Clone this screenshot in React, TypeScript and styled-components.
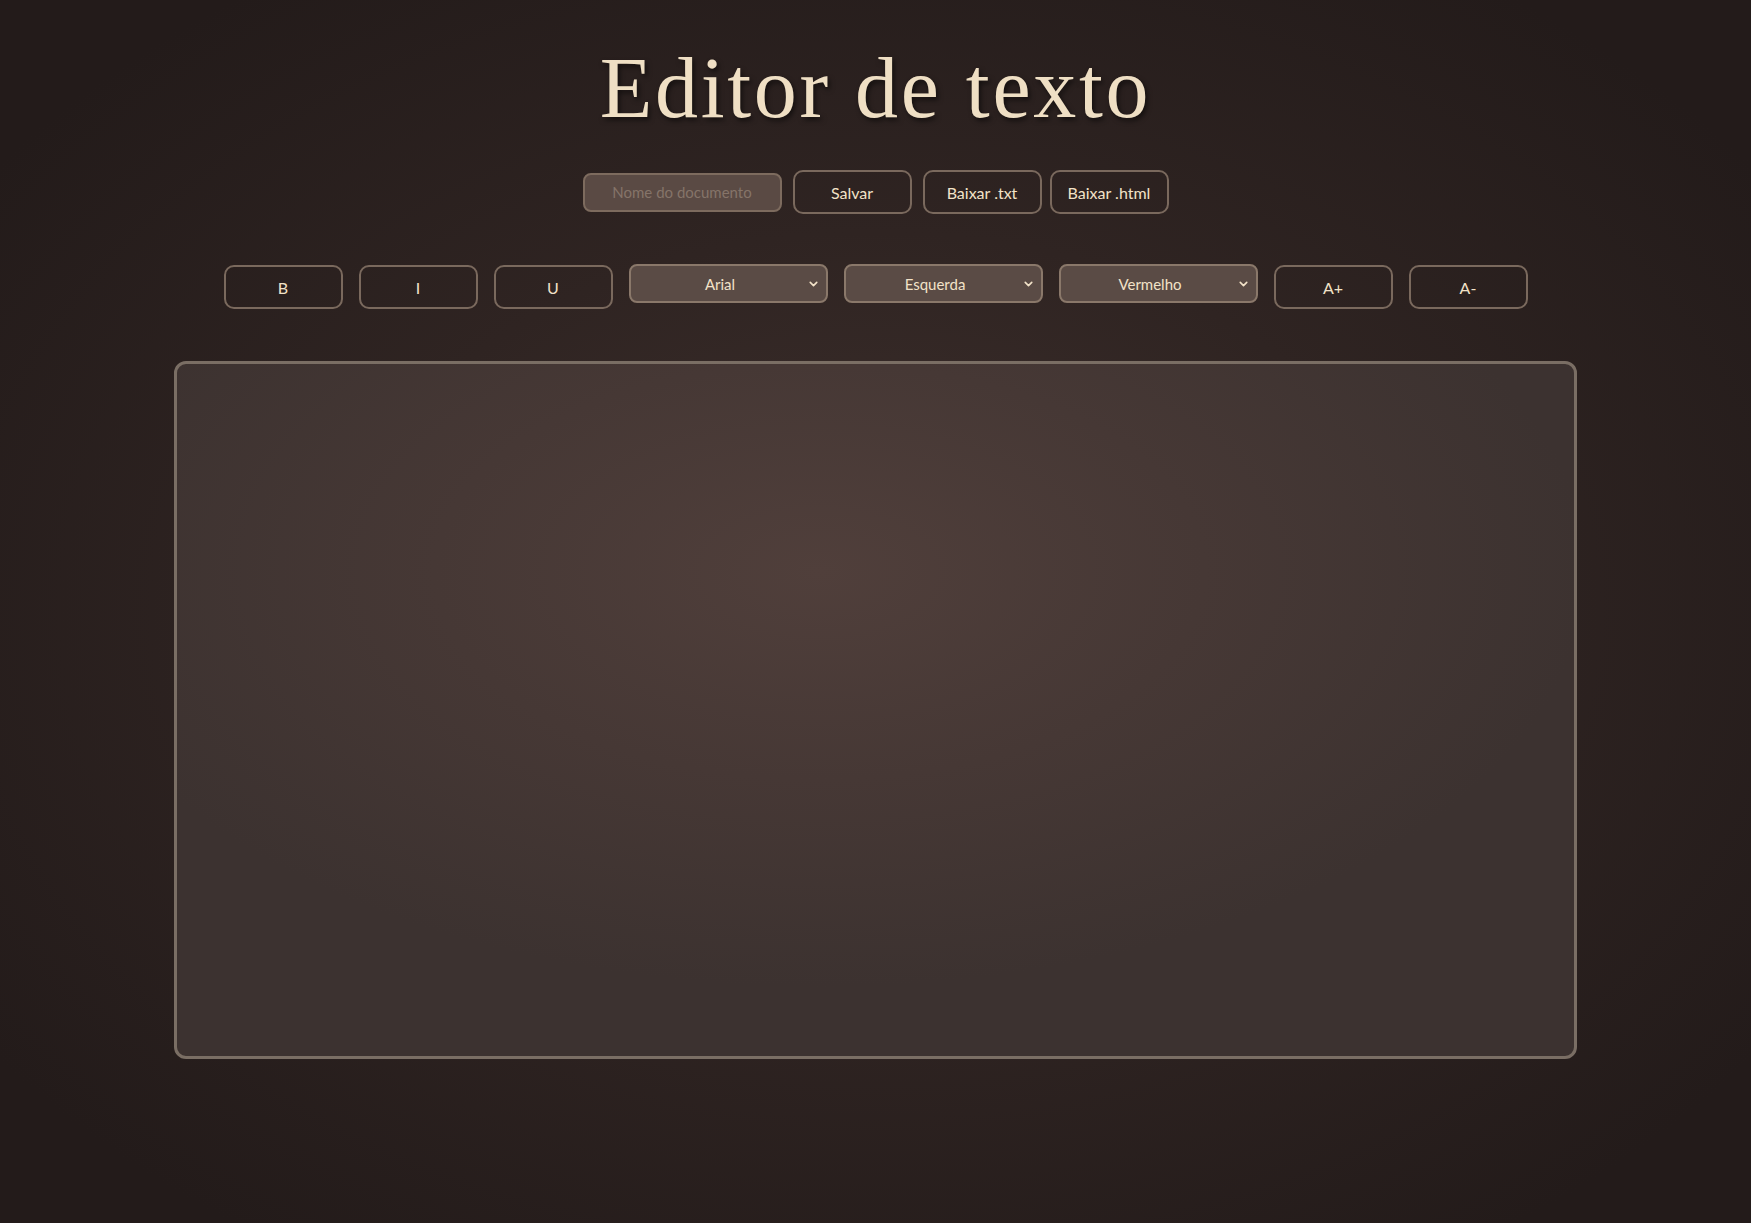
import React from "react";
import styled, { createGlobalStyle } from "styled-components";
import { ChevronDown } from "lucide-react";

const Global = createGlobalStyle`
  html, body { margin: 0; padding: 0; }
  body {
    min-height: 1223px;
    background: radial-gradient(ellipse 62% 62% at 50% 50%, #3e302d 0%, #2f2422 50%, #231b1a 100%);
    font-family: "Lato", "Open Sans", sans-serif;
  }
`;

const Page = styled.main`
  display: flex;
  flex-direction: column;
  align-items: center;
  min-height: 1223px;
  padding-top: 45px;
  box-sizing: border-box;
`;

const Title = styled.h1`
  margin: 0;
  font-family: "Liberation Serif", serif;
  font-weight: 400;
  font-size: 86px;
  letter-spacing: 2.7px;
  line-height: 1;
  color: #efdfc4;
  text-shadow: 2px 3px 5px rgba(0, 0, 0, 0.55);
`;

const TopBar = styled.div`
  display: flex;
  align-items: center;
  margin-top: 39px;
  gap: 11px;
`;

const NameInput = styled.input`
  box-sizing: border-box;
  width: 199px;
  height: 39px;
  border: 2px solid #7d6b5e;
  border-radius: 8px;
  background: #5a4a44;
  color: #efdfc4;
  font-family: "Lato", sans-serif;
  font-size: 15px;
  text-align: center;
  outline: none;
  &::placeholder { color: #857469; }
`;

const Button = styled.button<{ $tight?: boolean }>`
  box-sizing: border-box;
  width: 119px;
  height: 44px;
  margin-left: ${(p) => (p.$tight ? "-3px" : "0")};
  border: 2px solid #7a695d;
  border-radius: 10px;
  background: transparent;
  color: #f2e2c8;
  font-family: "Lato", sans-serif;
  font-size: 16px;
  cursor: pointer;
`;

const Toolbar = styled.div`
  display: flex;
  align-items: flex-start;
  gap: 16px;
  margin-top: 51px;
`;

const SelectWrap = styled.div`
  position: relative;
  width: 199px;
  height: 39px;
  margin-top: -1px;
`;

const Select = styled.select`
  box-sizing: border-box;
  appearance: none;
  width: 100%;
  height: 100%;
  border: 2px solid #8a786a;
  border-radius: 8px;
  background: #5a4b45;
  color: #f2e2c8;
  font-family: "Lato", sans-serif;
  font-size: 15px;
  text-align: center;
  text-align-last: center;
  padding: 0 16px 0 0;
  outline: none;
`;

const Arrow = styled.span`
  position: absolute;
  right: 8px;
  top: 50%;
  transform: translateY(-50%);
  display: flex;
  color: #f2e2c8;
  pointer-events: none;
`;

const Editor = styled.div`
  box-sizing: border-box;
  width: 1403px;
  height: 698px;
  margin-top: 52px;
  border: 3px solid #7a6e64;
  border-radius: 12px;
  background: radial-gradient(ellipse 55% 60% at 46% 30%, #503f3b 0%, #463835 50%, #3c3230 100%);
  color: #f2e2c8;
  font-family: "Liberation Sans", Arial, sans-serif;
  font-size: 16px;
  padding: 16px;
  outline: none;
`;

const Dropdown = ({ options }: { options: string[] }) => (
  <SelectWrap>
    <Select defaultValue={options[0]}>
      {options.map((o) => (
        <option key={o}>{o}</option>
      ))}
    </Select>
    <Arrow>
      <ChevronDown size={13} strokeWidth={3} />
    </Arrow>
  </SelectWrap>
);

export default function App() {
  return (
    <>
      <Global />
      <Page>
        <Title>Editor de texto</Title>
        <TopBar>
          <NameInput placeholder="Nome do documento" />
          <Button>Salvar</Button>
          <Button>Baixar .txt</Button>
          <Button $tight>Baixar .html</Button>
        </TopBar>
        <Toolbar>
          <Button>B</Button>
          <Button>I</Button>
          <Button>U</Button>
          <Dropdown options={["Arial", "Times New Roman", "Courier New"]} />
          <Dropdown options={["Esquerda", "Centro", "Direita"]} />
          <Dropdown options={["Vermelho", "Azul", "Verde"]} />
          <Button>A+</Button>
          <Button>A-</Button>
        </Toolbar>
        <Editor contentEditable suppressContentEditableWarning />
      </Page>
    </>
  );
}
